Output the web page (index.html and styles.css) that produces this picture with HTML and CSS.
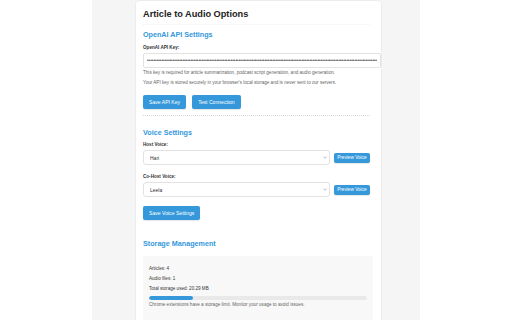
FILE: index.html
```html
<!DOCTYPE html>
<html>
<head>
  <title>Article to Audio Options</title>
  <meta name="viewport" content="width=device-width, initial-scale=1.0">
  <link rel="stylesheet" href="styles.css">
</head>
<body>
  <div class="page">
    <div class="card">
      <h1 class="title">Article to Audio Options</h1>

      <section class="section section-first">
        <h2>OpenAI API Settings</h2>
        <label class="field-label" for="apiKey">OpenAI API Key:</label>
        <input type="password" id="apiKey" class="text-input" value="sk-xxxxxxxxxxxxxxxxxxxxxxxxxxxxxxxxxxxxxxxxxxxxxxxxxxxxxxxxxxxxxxxxxxxxxxxxxxxxxxxxxxxxxxxxxxxxxxxxxxxxxxxxxxxxxxxxxxxxxxxxxxxxxxxxxxxxxxxxxxxxxxxxxxxxxxxxxxxxxxxxxxxxxxxxxxxxxxxxxxxx">
        <p class="help">This key is required for article summarization, podcast script generation, and audio generation.</p>
        <p class="help help-second">Your API key is stored securely in your browser's local storage and is never sent to our servers.</p>
        <div class="btn-row">
          <button class="btn">Save API Key</button>
          <button class="btn">Test Connection</button>
        </div>
      </section>

      <section class="section section-voice">
        <h2>Voice Settings</h2>
        <label class="field-label" for="hostVoice">Host Voice:</label>
        <div class="voice-row">
          <div class="select-wrap">
            <select id="hostVoice" class="voice-select">
              <option>Hari</option>
            </select>
            <svg class="chevron" width="4" height="3" viewBox="0 0 4 3"><path d="M0.5 0.8 L2 2.2 L3.5 0.8" fill="none" stroke="#888" stroke-width="0.6"/></svg>
          </div>
          <button class="btn btn-small">Preview Voice</button>
        </div>
        <label class="field-label label-gap" for="coHostVoice">Co-Host Voice:</label>
        <div class="voice-row">
          <div class="select-wrap">
            <select id="coHostVoice" class="voice-select">
              <option>Leela</option>
            </select>
            <svg class="chevron" width="4" height="3" viewBox="0 0 4 3"><path d="M0.5 0.8 L2 2.2 L3.5 0.8" fill="none" stroke="#888" stroke-width="0.6"/></svg>
          </div>
          <button class="btn btn-small">Preview Voice</button>
        </div>
        <div class="btn-row btn-row-voice">
          <button class="btn">Save Voice Settings</button>
        </div>
      </section>

      <section class="section section-storage">
        <h2>Storage Management</h2>
        <div class="storage-box">
          <p class="stat">Articles: 4</p>
          <p class="stat">Audio files: 1</p>
          <p class="stat">Total storage used: 20.29 MB</p>
          <div class="progress"><div class="progress-fill" style="width: 20%;"></div></div>
          <p class="note">Chrome extensions have a storage limit. Monitor your usage to avoid issues.</p>
        </div>
      </section>
    </div>
  </div>
</body>
</html>
```

FILE: styles.css
```css
body {
  margin: 0;
  background-color: #fff;
  font-family: "Liberation Sans", Arial, sans-serif;
  color: #333;
}

.page {
  width: 328px;
  margin-left: 92px;
  height: 100vh;
  overflow: hidden;
  background-color: #f5f5f5;
  padding-left: 43px;
  box-sizing: border-box;
}

.card {
  width: 247px;
  min-height: 340px;
  box-sizing: border-box;
  background-color: #fff;
  border: 1px solid #ececec;
  border-radius: 4px;
  padding: 7.4px 11px 0 7px;
}

.title {
  margin: 0;
  font-size: 9.2px;
  line-height: 12px;
  font-weight: bold;
  color: #222;
  padding-bottom: 3.6px;
  border-bottom: 1px dotted #f0f0f0;
}

.section {
  padding: 12px 0 5.7px;
  border-bottom: 1px dotted #d8d8d8;
}

.section-first {
  padding-top: 5.2px;
}

.section-voice,
.section-storage {
  border-bottom-color: transparent;
}

.section h2 {
  margin: 0;
  font-size: 7.2px;
  line-height: 9px;
  font-weight: bold;
  color: #3498db;
}

.field-label {
  display: block;
  margin-top: 6.3px;
  font-size: 4.6px;
  line-height: 6px;
  font-weight: bold;
  color: #333;
}

.section-voice .field-label {
  margin-top: 5.1px;
}

.section-voice .label-gap {
  margin-top: 8.3px;
}

.text-input {
  display: block;
  box-sizing: border-box;
  width: calc(100% + 11.3px);
  height: 14.4px;
  margin: 1.8px 0 0;
  padding: 0 3px;
  border: 1px solid #e2e2e2;
  border-radius: 2px;
  font-family: "Liberation Sans", Arial, sans-serif;
  font-size: 4.6px;
  color: #444;
  background-color: #fff;
  outline: none;
}

.help {
  margin: 2px 0 0;
  font-size: 4.6px;
  line-height: 6px;
  color: #666;
}

.help-second {
  margin-top: 4.7px;
}

.btn-row {
  display: flex;
  gap: 6px;
  margin-top: 8.6px;
}

.btn-row-voice {
  margin-top: 9px;
}

.btn {
  height: 14px;
  padding: 0 6px;
  border: none;
  border-radius: 2px;
  background-color: #3498db;
  color: #fff;
  font-family: "Liberation Sans", Arial, sans-serif;
  font-size: 5.1px;
  cursor: pointer;
  box-shadow: 0 0.5px 1px rgba(0, 0, 0, 0.1);
}

.btn-small {
  height: 10px;
  padding: 0 3.4px;
  font-size: 4.7px;
  flex-shrink: 0;
}

.voice-row {
  display: flex;
  align-items: center;
  gap: 4px;
  margin-top: 2.7px;
}

.select-wrap {
  position: relative;
  flex: 1;
}

.voice-select {
  display: block;
  width: 100%;
  height: 15px;
  box-sizing: border-box;
  -webkit-appearance: none;
  appearance: none;
  padding: 0 6px;
  border: 1px solid #e2e2e2;
  border-radius: 3px;
  background-color: #fff;
  font-family: "Liberation Sans", Arial, sans-serif;
  font-size: 5px;
  color: #333;
  outline: none;
}

.chevron {
  position: absolute;
  right: 2.5px;
  top: 6px;
}

.storage-box {
  width: calc(100% + 3px);
  box-sizing: border-box;
  margin-top: 7.8px;
  padding: 10.3px 6px 14px;
  background-color: #f8f8f8;
  border-radius: 3px;
  min-height: 80px;
}

.stat {
  margin: 0 0 4px;
  font-size: 4.6px;
  line-height: 6px;
  color: #333;
}

.progress {
  height: 3.4px;
  margin-top: 0.3px;
  border-radius: 2px;
  background-color: #e9e9e9;
  overflow: hidden;
}

.progress-fill {
  height: 100%;
  border-radius: 2px;
  background-color: #3498db;
}

.note {
  margin: 2px 0 0;
  font-size: 4.6px;
  line-height: 6px;
  color: #666;
}
```
